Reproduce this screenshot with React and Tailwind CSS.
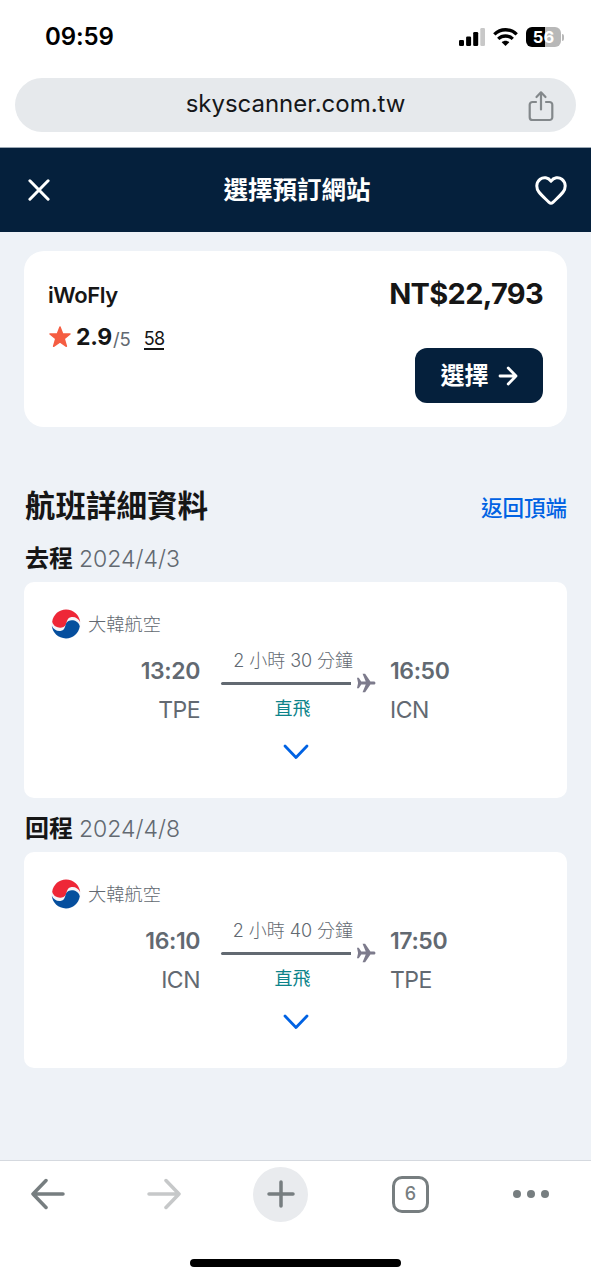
import React from 'react';

const flights = [
    {
        id: 'outbound',
        label: '去程',
        date: '2024/4/3',
        departTime: '13:20',
        departCode: 'TPE',
        arriveTime: '16:50',
        arriveCode: 'ICN',
        duration: '2 小時 30 分鐘',
    },
    {
        id: 'return',
        label: '回程',
        date: '2024/4/8',
        departTime: '16:10',
        departCode: 'ICN',
        arriveTime: '17:50',
        arriveCode: 'TPE',
        duration: '2 小時 40 分鐘',
    },
];

function StatusBar() {
    return (
        <div className="flex h-[78px] items-center justify-between pb-1 pl-[45px] pr-[27px]">
            <span className="text-[24px] font-semibold leading-none tracking-[-0.1px] text-black">09:59</span>
            <div className="flex items-center gap-[8px]">
                <svg width="26" height="18" viewBox="0 0 26 18">
                    <rect x="0" y="12" width="5" height="6" rx="1.3" fill="#000" />
                    <rect x="7.1" y="8.5" width="5" height="9.5" rx="1.3" fill="#000" />
                    <rect x="14.2" y="4" width="5" height="14" rx="1.3" fill="#000" />
                    <rect x="21.3" y="0" width="4.7" height="18" rx="1.3" fill="#c8c8c8" />
                </svg>
                <svg width="25" height="18" viewBox="0 0 25 18" fill="none" stroke="#000" strokeWidth="3.3">
                    <path d="M1.3 6.4C7.6.2 17.4.2 23.7 6.4" />
                    <path d="M5.2 10.9c4.2-3.9 10.4-3.9 14.6 0" />
                    <path d="M12.5 18 8.7 14.2c2.1-2 5.5-2 7.6 0z" fill="#000" stroke="none" />
                </svg>
                <div className="flex items-center gap-[1px]">
                    <div className="flex h-5 w-[35px] items-center justify-center rounded-[6px] bg-linear-to-r from-black from-55% to-[#b8b8b8] to-55% text-[16.5px] font-bold leading-none text-white">
                        56
                    </div>
                    <div className="h-[7px] w-[2px] rounded-r-full bg-[#b8b8b8]" />
                </div>
            </div>
        </div>
    );
}

function AddressBar() {
    return (
        <div className="h-[69px] px-[15px]">
            <div className="relative flex h-[54px] items-center justify-center rounded-full bg-[#e6e9ec]">
                <span className="pb-[2px] text-[24px] leading-none tracking-[-0.03px] text-[#151719]">skyscanner.com.tw</span>
                <svg
                    className="absolute right-[22px] top-3"
                    width="26"
                    height="32"
                    viewBox="0 0 26 32"
                    fill="none"
                    stroke="#83888b"
                    strokeWidth="2.2"
                    strokeLinecap="round"
                    strokeLinejoin="round"
                >
                    <path d="M8 12H4.5A2.8 2.8 0 0 0 1.7 14.8v12.4A2.8 2.8 0 0 0 4.5 30h17a2.8 2.8 0 0 0 2.8-2.8V14.8a2.8 2.8 0 0 0-2.8-2.8H18" />
                    <path d="M13 19.5V2.5M8.5 7 13 2.3 17.5 7" />
                </svg>
            </div>
        </div>
    );
}

function PageHeader() {
    return (
        <header className="flex h-[85px] items-center justify-between border-t border-[#9ba8b4] bg-[#05203c] pl-[28px] pr-[24px] text-white">
            <svg className="mr-[9px]" width="22" height="24" viewBox="0 0 22 24" fill="none" stroke="currentColor" strokeWidth="3" strokeLinecap="round">
                <path d="M1.9 2.8 20.1 21.2M20.1 2.8 1.9 21.2" />
            </svg>
            <h1 className="text-[24.5px] font-bold leading-none">選擇預訂網站</h1>
            <svg width="32" height="29" viewBox="0 0 32 29" fill="none" stroke="currentColor" strokeWidth="3" strokeLinejoin="round">
                <path d="M16 5.3C13.3 1.2 8.3.8 5.1 3.2 1.1 6.3.8 12 3.9 16c2.7 3.5 7 7.2 10.2 10.4 1.3 1.2 2.5 1.2 3.8 0C21.100 23.200 25.400 19.500 28.100 16c3.1-4 2.800-9.700-1.200-12.800C23.700.8 18.700 1.200 16 5.300z" />
            </svg>
        </header>
    );
}

function AgentCard() {
    return (
        <section className="flex h-[176px] justify-between rounded-[20px] bg-white pl-6 pr-[24px]">
            <div className="pt-[32px]">
                <h2 className="text-[22px] font-semibold leading-6 tracking-[-0.4px] text-[#161616]">iWoFly</h2>
                <div className="mt-[18px] flex h-6 items-center">
                    <svg width="24" height="24" viewBox="0 0 24 24" fill="#f55d42" stroke="#f55d42" strokeWidth="1.5" strokeLinejoin="round">
                        <path d="m12 2 2.7 7h7.3l-5.800 4.700 2.200 7.600L12 17l-6.400 4.300 2.200-7.600L2 9h7.300z" />
                    </svg>
                    <span className="ml-[4px] text-[23px] font-bold leading-6 tracking-[-0.3px] text-[#161616]">2.9</span>
                    <span className="ml-[1px] pt-1 text-[18.500px] leading-5 text-[#626971]">/5</span>
                    <span className="ml-[13px] mt-[4px] border-b-2 border-[#161616] text-[18px] leading-[19px] tracking-[-0.8px] text-[#161616]">58</span>
                </div>
            </div>
            <div className="flex flex-col items-end pt-[27px]">
                <span className="text-[29px] font-bold leading-8 tracking-[-0.7px] text-[#161616]">NT$22,793</span>
                <button className="mt-[38px] flex h-[55px] w-[128px] items-center justify-center gap-[9px] rounded-xl bg-[#05203c] text-white">
                    <span className="text-[24px] font-bold leading-none">選擇</span>
                    <svg width="20" height="20" viewBox="0 0 20 20" fill="none" stroke="currentColor" strokeWidth="2.8" strokeLinecap="round" strokeLinejoin="round">
                        <path d="M2 10h16M10.200 2l7.800 8-7.800 8" />
                    </svg>
                </button>
            </div>
        </section>
    );
}

function KoreanAirLogo() {
    return (
        <svg width="30" height="30" viewBox="0 0 30 30">
            <circle cx="15" cy="15" r="14.500" fill="#f5f6f9" />
            <path d="M1.200 12.800C2.300 5.500 8.100.6 15 .6c7.700 0 13.400 5.600 14.200 12.600-1.600-3.600-5-5.700-8.700-5.200-4.700.6-4.200 4.600-5.700 7.700-2.400 4.900-11.900 3.900-13.600-2.900z" fill="#ee2737" />
            <path d="M28.800 17.200c-1.100 7.300-6.900 12.200-13.800 12.200C7.300 29.400 1.600 23.800.8 16.800c1.600 3.600 5 5.700 8.700 5.200 4.700-.6 4.200-4.600 5.700-7.700 2.400-4.900 11.900-3.900 13.600 2.900z" fill="#064f9e" />
        </svg>
    );
}

function PlaneIcon() {
    return (
        <svg width="20" height="20" viewBox="0 0 20 20" fill="#7d7b8c">
            <path d="M1 4.700h1.800l2.500 3.700h4.500L6.600.7h2.600l5.300 7.700h3.200c1.200 0 1.900.7 1.900 1.600s-.7 1.600-1.900 1.600h-3.200l-5.300 7.700H6.600l3.200-7.700H5.300l-2.500 3.700H1L2.100 10z" />
        </svg>
    );
}

function FlightCard({ flight }) {
    return (
        <div className="h-[216px] rounded-[10px] bg-white pt-[27px]">
            <div className="flex h-[30px] items-center gap-[7px] pl-[27px]">
                <KoreanAirLogo />
                <span className="text-[18.300px] font-light leading-none text-[#626971]">大韓航空</span>
            </div>
            <div className="flex h-[92px] pt-[10px] text-[#626971]">
                <div className="flex w-[176px] flex-col items-end pt-[9px]">
                    <span className="text-[23px] font-semibold leading-[26px] tracking-[-0.4px]">{flight.departTime}</span>
                    <span className="mt-[13px] text-[23px] leading-[26px] tracking-[-0.5px]">{flight.departCode}</span>
                </div>
                <div className="ml-[21px] w-[155px]">
                    <div className="pr-[23px] text-right text-[18px] font-light leading-6 tracking-[-0.05px] whitespace-nowrap">{flight.duration}</div>
                    <div className="flex h-5 items-center gap-[5px]">
                        <div className="h-[3px] w-[131px] rounded-l-full bg-[#626971]" />
                        <PlaneIcon />
                    </div>
                    <div className="mt-[4px] w-[143px] text-center text-[18px] leading-6 text-[#0c838a]">直飛</div>
                </div>
                <div className="ml-[14px] flex flex-col pt-[9px]">
                    <span className="text-[23px] font-semibold leading-[26px] tracking-[-0.4px]">{flight.arriveTime}</span>
                    <span className="mt-[13px] text-[23px] leading-[26px] tracking-[-0.5px]">{flight.arriveCode}</span>
                </div>
            </div>
            <div className="flex justify-center pt-[13px]">
                <svg width="26" height="16" viewBox="0 0 26 16" fill="none" stroke="#0062e3" strokeWidth="2.800" strokeLinecap="round" strokeLinejoin="round">
                    <path d="m2 2 11 11.500L24 2" />
                </svg>
            </div>
        </div>
    );
}

function BottomBar() {
    return (
        <footer className="h-[119px] border-t border-[#d5d9df] bg-white pt-[5px]">
            <nav className="flex h-[56px] items-center justify-between pl-[31px] pr-[42px]">
                <svg width="34" height="32" viewBox="0 0 34 32" fill="none" stroke="#777e80" strokeWidth="3.500" strokeLinecap="round" strokeLinejoin="round">
                    <path d="M32 16H2M15 2.500 2 16l13 13.500" />
                </svg>
                <svg className="ml-[-2px]" width="34" height="32" viewBox="0 0 34 32" fill="none" stroke="#c6c8c9" strokeWidth="3.500" strokeLinecap="round" strokeLinejoin="round">
                    <path d="M2 16h30M19 2.500 32 16 19 29.500" />
                </svg>
                <div className="ml-[-12px] flex h-[55px] w-[55px] items-center justify-center rounded-full bg-[#e9ebee]">
                    <svg width="28" height="28" viewBox="0 0 28 28" stroke="#777e80" strokeWidth="3.500" strokeLinecap="round">
                        <path d="M14 2v24M2 14h24" />
                    </svg>
                </div>
                <div className="flex h-[37px] w-[37px] items-center justify-center rounded-[10px] border-[3px] border-[#777e80] text-[18px] font-medium leading-none text-[#777e80]">
                    6
                </div>
                <div className="flex gap-[6px]">
                    <span className="h-2 w-2 rounded-full bg-[#777e80]" />
                    <span className="h-2 w-2 rounded-full bg-[#777e80]" />
                    <span className="h-2 w-2 rounded-full bg-[#777e80]" />
                </div>
            </nav>
            <div className="mx-auto mt-[37px] h-2 w-[211px] rounded-full bg-black" />
        </footer>
    );
}

function App() {
    return (
        <div className="flex h-[1279px] w-[591px] flex-col overflow-hidden bg-white font-[Inter,'Noto_Sans_CJK_TC',sans-serif]">
            <StatusBar />
            <AddressBar />
            <PageHeader />
            <main className="h-[928px] bg-[#eef2f7] px-6 pt-[19px]">
                <AgentCard />
                <div className="mt-[57px] flex h-11 items-center justify-between pl-[1px]">
                    <h2 className="text-[30.500px] font-bold leading-none text-[#161616]">航班詳細資料</h2>
                    <a className="pt-[5px] text-[21.500px] font-medium leading-none text-[#0062e3]">返回頂端</a>
                </div>
                {flights.map(flight => (
                    <section key={flight.id} className="pt-[8px] first-of-type:pt-0">
                        <div className="flex h-[46px] items-center gap-[6px] pl-[1px]">
                            <h3 className="text-[24px] font-bold leading-none text-[#161616]">{flight.label}</h3>
                            <span className="text-[23px] font-light leading-none text-[#626971]">{flight.date}</span>
                        </div>
                        <FlightCard flight={flight} />
                    </section>
                ))}
            </main>
            <BottomBar />
        </div>
    );
}

export default App;
